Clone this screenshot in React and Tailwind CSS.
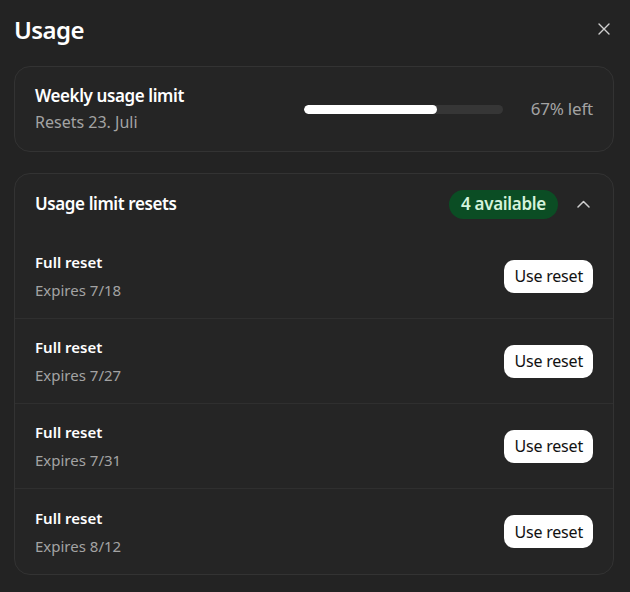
import React from 'react'

const resets = [
  { id: 1, expires: '7/18' },
  { id: 2, expires: '7/27' },
  { id: 3, expires: '7/31' },
  { id: 4, expires: '8/12' },
];

const ResetRow = ({ expires, last }) => {
  return (
    <div className={`flex items-center justify-between h-[85px] pl-5 pr-5 ${last ? '' : 'border-b border-[#2f2f2f]'}`}>
      <div className="flex flex-col">
        <span className="text-[15px] font-semibold text-white leading-[20px]">Full reset</span>
        <span className="text-[15px] text-[#a3a3a3] leading-[20px] mt-2">Expires {expires}</span>
      </div>
      <button className="h-[33px] px-[10px] rounded-[10px] bg-white text-[#111] text-[16px] tracking-[-0.2px] leading-none">
        Use reset
      </button>
    </div>
  );
}

export default function App() {
  const pct = 67;
  return (
    <div className="w-[630px] h-[592px] bg-[#232323] pl-[14px] pr-[16px] pt-[14px] text-white" style={{ fontFamily: '"Noto Sans", "Open Sans", sans-serif' }}>
      <div className="flex items-center justify-between h-[32px]">
        <h1 className="text-[24px] font-semibold tracking-[-0.6px]">Usage</h1>
        <svg width="12" height="12" viewBox="0 0 12 12" className="mr-[4px] mt-[-2px]">
          <path d="M1 1L11 11M11 1L1 11" stroke="#cfcfcf" strokeWidth="1.4" strokeLinecap="round" />
        </svg>
      </div>

      <div className="mt-[20px] h-[86px] rounded-[16px] border border-[#333] bg-[#252525] flex items-center pl-5 pr-5">
        <div className="flex flex-col flex-1">
          <span className="text-[17px] font-semibold leading-[24px] tracking-[-0.4px]">Weekly usage limit</span>
          <span className="text-[16px] text-[#a3a3a3] leading-[24px] mt-[2px]">Resets 23. Juli</span>
        </div>
        <div className="w-[199px] h-[9px] rounded-full bg-[#363636] overflow-hidden">
          <div className="h-full rounded-full bg-white" style={{ width: `${pct}%` }} />
        </div>
        <span className="w-[90px] text-right text-[17px] text-[#a3a3a3] tracking-[-0.2px]">{pct}% left</span>
      </div>

      <div className="mt-[21px] rounded-[16px] border border-[#333] bg-[#252525]">
        <div className="flex items-center h-[60px] pl-5 pr-5">
          <span className="flex-1 text-[17px] font-semibold tracking-[-0.4px]">Usage limit resets</span>
          <span className="h-[29px] px-3 rounded-full bg-[#0b4d24] text-[#d4f3dc] text-[17px] font-semibold tracking-[-0.3px] flex items-center">4 available</span>
          <svg width="13" height="8" viewBox="0 0 13 8" className="ml-[19px] mr-[3px]">
            <path d="M1 7L6.5 1.5L12 7" stroke="#cfcfcf" strokeWidth="1.5" fill="none" strokeLinecap="round" strokeLinejoin="round" />
          </svg>
        </div>
        {resets.map((r, i) => (
          <ResetRow key={r.id} expires={r.expires} last={i === resets.length - 1} />
        ))}
      </div>
    </div>
  );
}
